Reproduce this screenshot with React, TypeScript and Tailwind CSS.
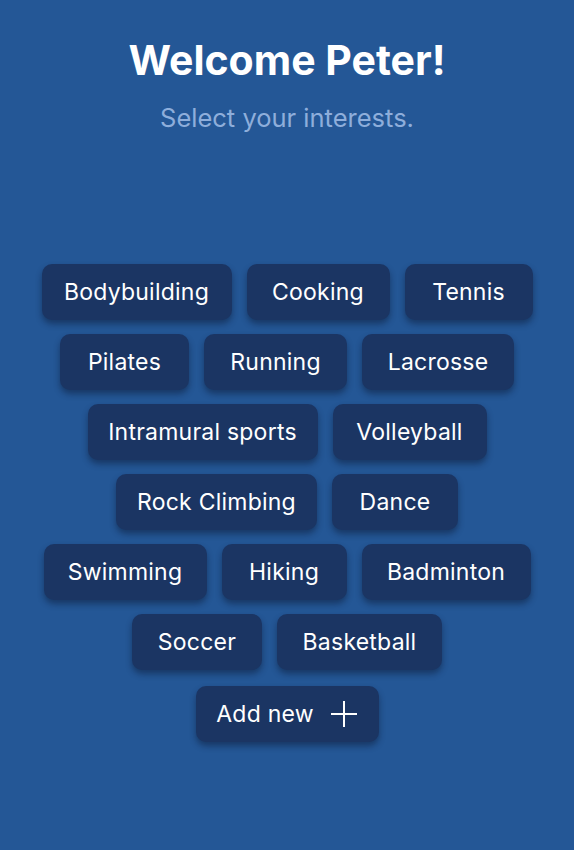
// widths taken from the mock, chips don't size purely by padding
const interests = [
  { label: 'Bodybuilding', w: 'w-[190px]' },
  { label: 'Cooking', w: 'w-[143px]' },
  { label: 'Tennis', w: 'w-[128px]' },
  { label: 'Pilates', w: 'w-[129px]' },
  { label: 'Running', w: 'w-[143px]' },
  { label: 'Lacrosse', w: 'w-[152px]' },
  { label: 'Intramural sports', w: 'w-[230px]' },
  { label: 'Volleyball', w: 'w-[154px]' },
  { label: 'Rock Climbing', w: 'w-[201px]' },
  { label: 'Dance', w: 'w-[126px]' },
  { label: 'Swimming', w: 'w-[163px]' },
  { label: 'Hiking', w: 'w-[125px]' },
  { label: 'Badminton', w: 'w-[169px]' },
  { label: 'Soccer', w: 'w-[130px]' },
  { label: 'Basketball', w: 'w-[165px]' },
]

const Chip = ({ label, w }: { label: string; w: string }) => (
  <button
    className={`${w} h-14 rounded-[10px] bg-[#1b3563] text-white text-[23px] tracking-[0.01em] shadow-[0_4px_6px_rgba(8,20,45,0.45)]`}
  >
    {label}
  </button>
)

export default function App() {
  return (
    <div className="min-h-[850px] bg-[#245796] font-['Inter',sans-serif] pt-9">
      <h1 className="text-center text-white text-[41px] leading-[48px] font-bold">Welcome Peter!</h1>
      <p className="mt-[18px] text-center text-[#8eaedb] text-[25.5px] leading-8">Select your interests.</p>

      <div className="w-[500px] mx-auto mt-[130px] flex flex-wrap justify-center gap-x-[15px] gap-y-[14px]">
        {interests.map((i) => (
          <Chip key={i.label} label={i.label} w={i.w} />
        ))}
        <button className="mt-[2px] w-[183px] h-14 rounded-[10px] bg-[#1b3563] text-white text-[23px] tracking-[0.01em] shadow-[0_4px_6px_rgba(8,20,45,0.45)] flex items-center justify-center gap-4">
          Add new
          <svg width="28" height="28" viewBox="0 0 28 28" fill="none" stroke="currentColor" strokeWidth="2">
            <path d="M14 1v26M1 14h26" />
          </svg>
        </button>
      </div>
    </div>
  )
}
